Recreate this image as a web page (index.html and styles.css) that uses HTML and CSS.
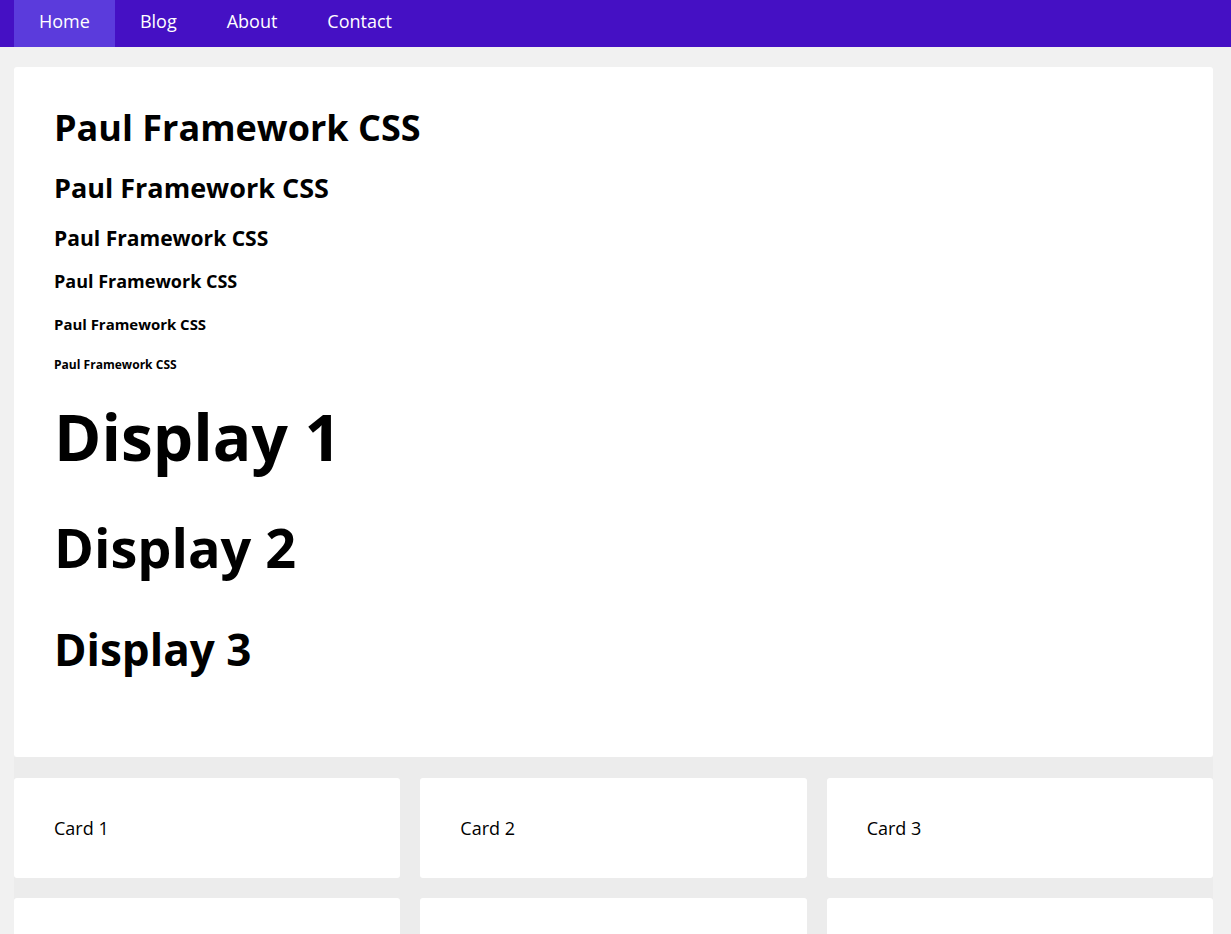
FILE: index.html
```html
<!DOCTYPE html>
<html lang="en">
<head>
<meta charset="utf-8">
<title>Paul Framework CSS</title>
<link rel="stylesheet" href="styles.css">
</head>
<body>
<nav class="navbar">
  <a class="nav-link active" href="#">Home</a>
  <a class="nav-link" href="#">Blog</a>
  <a class="nav-link" href="#">About</a>
  <a class="nav-link" href="#">Contact</a>
</nav>
<main class="container">
  <section class="panel">
    <h1>Paul Framework CSS</h1>
    <h2>Paul Framework CSS</h2>
    <h3>Paul Framework CSS</h3>
    <h4>Paul Framework CSS</h4>
    <h5>Paul Framework CSS</h5>
    <h6>Paul Framework CSS</h6>
    <p class="display-1">Display 1</p>
    <p class="display-2">Display 2</p>
    <p class="display-3">Display 3</p>
  </section>
  <section class="grid">
    <div class="card">Card 1</div>
    <div class="card">Card 2</div>
    <div class="card">Card 3</div>
    <div class="card">Card 4</div>
    <div class="card">Card 5</div>
    <div class="card">Card 6</div>
  </section>
</main>
</body>
</html>
```

FILE: styles.css
```css
html {
  font-size: 18px;
}
html, body {
  margin: 0;
  padding: 0;
}
body {
  background: #f1f1f1;
  font-family: "Open Sans", "Noto Sans", sans-serif;
  color: #000;
  font-size: 18px;
}
.navbar {
  display: flex;
  background: #4510c4;
  height: 47px;
  padding: 0 14px;
}
.nav-link {
  display: block;
  padding: 11px 25px 0;
  line-height: 21.6px;
  color: #fff;
  text-decoration: none;
  font-size: 18px;
}
.nav-link.active {
  background: #5b3bdc;
}
.container {
  padding: 20px 18px 0 14px;
}
.panel {
  background: #fff;
  border-radius: 3px;
  padding: 39px 40px 40px;
}
.panel h1, .panel h2, .panel h3, .panel h4, .panel h5, .panel h6,
.display-1, .display-2, .display-3 {
  font-weight: 700;
  line-height: 1.2;
  margin: 0;
}
.panel h1 { font-size: 36px; margin-bottom: 23px; }
.panel h2 { font-size: 27px; margin-bottom: 20px; }
.panel h3 { font-size: 21.06px; margin-bottom: 21px; }
.panel h4 { font-size: 18px; margin-bottom: 24px; }
.panel h5 { font-size: 14.94px; margin-bottom: 24px; }
.panel h6 { font-size: 12.06px; margin-bottom: 26px; }
.display-1 { font-size: 64px; margin-bottom: 39px; }
.display-2 { font-size: 54px; margin-bottom: 44px; }
.display-3 { font-size: 44px; margin-bottom: 41px; }
.grid {
  background: #ececec;
  display: grid;
  grid-template-columns: repeat(3, 1fr);
  gap: 20px;
  padding-top: 21px;
}
.card {
  background: #fff;
  border-radius: 3px;
  padding: 40px;
  line-height: 20px;
  font-size: 18px;
}
```
